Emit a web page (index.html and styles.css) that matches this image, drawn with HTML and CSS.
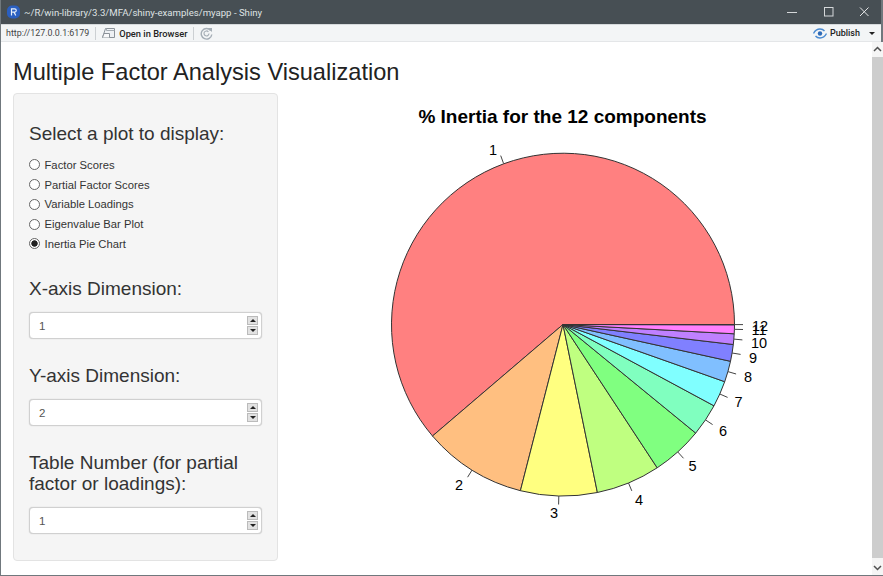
FILE: index.html
```html
<!DOCTYPE html>
<html lang="en">
<head>
    <meta charset="utf-8" />
    <title>~/R/win-library/3.3/MFA/shiny-examples/myapp - Shiny</title>
    <link rel="stylesheet" href="styles.css">
</head>
<body>
    <div class="window">
        <div class="titlebar">
            <svg class="r-logo" width="13" height="14" viewBox="0 0 13 14">
                <rect x="0" y="0.500" width="13" height="13" rx="5" fill="#2a5fc0" />
                <path d="M4.500 10.500V3.800H7.600a1.600 1.600 0 0 1 0 3.300H5.200M7 7.100L8.800 10.500" fill="none" stroke="#e8f0fb" stroke-width="1.200" />
            </svg>
            <span class="title-text">~/R/win-library/3.3/MFA/shiny-examples/myapp - Shiny</span>
            <div class="window-controls">
                <svg width="12" height="12" viewBox="0 0 12 12"><path d="M1 6.500H11" stroke="#d5d8da" stroke-width="1" /></svg>
                <svg width="12" height="12" viewBox="0 0 12 12"><rect x="1.500" y="1.500" width="8.500" height="8.500" fill="none" stroke="#d5d8da" stroke-width="1" /></svg>
                <svg width="12" height="12" viewBox="0 0 12 12"><path d="M1 1.500L9.500 10M9.500 1.500L1 10" stroke="#e4e6e7" stroke-width="1" /></svg>
            </div>
        </div>

        <div class="toolbar">
            <span class="url">http://127.0.0.1:6179</span>
            <span class="sep"></span>
            <svg class="open-icon" width="14" height="12" viewBox="0 0 14 12">
                <path d="M3.500 1.500H12.500V10.500H0.500Z" fill="#eef1f4" stroke="#8b9299" />
                <path d="M0.500 10.500L2 6.500H7.500V10.500" fill="#f8f9fa" stroke="#8b9299" />
                <path d="M4.500 1.500V3.500H12.500" fill="none" stroke="#a5acb3" />
            </svg>
            <span class="open-text">Open in Browser</span>
            <span class="sep"></span>
            <svg class="refresh-icon" width="13" height="13" viewBox="0 0 13 13">
                <path d="M10.700 3.500A5.300 5.300 0 1 0 11.800 7.500" fill="none" stroke="#a4adb5" stroke-width="1.400" />
                <path d="M9 6.500A2.500 2.500 0 1 1 8.400 4.800" fill="none" stroke="#a4adb5" stroke-width="1.100" />
                <path d="M7.500 1H12V5Z" fill="#a4adb5" />
            </svg>
            <div class="publish">
                <svg width="14" height="11" viewBox="0 0 14 11">
                    <circle cx="7" cy="5.500" r="2.200" fill="#2d6bb8" />
                    <path d="M0.500 5.500C2 2.500 4.500 1 7 1C9 1 10.500 1.800 11.500 3" fill="none" stroke="#4a8ad0" stroke-width="1.400" />
                    <path d="M13.500 5.500C12 8.500 9.500 10 7 10C5 10 3.500 9.200 2.500 8" fill="none" stroke="#4a8ad0" stroke-width="1.400" />
                </svg>
                <span>Publish</span>
                <span class="caret"></span>
            </div>
        </div>

        <div class="content">
            <div class="page">
                <h2 class="app-title">Multiple Factor Analysis Visualization</h2>
                <div class="row">
                    <div class="well">
                        <div class="field">
                            <label class="control-label">Select a plot to display:</label>
                            <div class="radios">
                                <label class="radio"><input type="radio" name="plot"><span>Factor Scores</span></label>
                                <label class="radio"><input type="radio" name="plot"><span>Partial Factor Scores</span></label>
                                <label class="radio"><input type="radio" name="plot"><span>Variable Loadings</span></label>
                                <label class="radio"><input type="radio" name="plot"><span>Eigenvalue Bar Plot</span></label>
                                <label class="radio"><input type="radio" name="plot" checked><span>Inertia Pie Chart</span></label>
                            </div>
                        </div>
                        <div class="field">
                            <label class="control-label">X-axis Dimension:</label>
                            <div class="number-input">
                                <span class="value">1</span>
                                <span class="spinner"><i class="up"></i><i class="down"></i></span>
                            </div>
                        </div>
                        <div class="field">
                            <label class="control-label">Y-axis Dimension:</label>
                            <div class="number-input">
                                <span class="value">2</span>
                                <span class="spinner"><i class="up"></i><i class="down"></i></span>
                            </div>
                        </div>
                        <div class="field">
                            <label class="control-label">Table Number (for partial factor or loadings):</label>
                            <div class="number-input">
                                <span class="value">1</span>
                                <span class="spinner"><i class="up"></i><i class="down"></i></span>
                            </div>
                        </div>
                    </div>

                    <svg class="plot" width="560" height="468" viewBox="300 93 560 468">
                        <text class="plot-title" x="562.500" y="123">% Inertia for the 12 components</text>
                        <g stroke="#333" stroke-width="1">
                            <path fill="#ff8080" d="M563 324.500L734.500 324.500A171.500 171.500 0 1 0 432.500 436Z" />
                            <path fill="#ffbf80" d="M563 324.500L432.500 436A171.500 171.500 0 0 0 520.400 490.700Z" />
                            <path fill="#ffff80" d="M563 324.500L520.400 490.700A171.500 171.500 0 0 0 597.400 492.500Z" />
                            <path fill="#bfff80" d="M563 324.500L597.400 492.500A171.500 171.500 0 0 0 657.200 467.800Z" />
                            <path fill="#80ff80" d="M563 324.500L657.200 467.800A171.500 171.500 0 0 0 695.700 433.100Z" />
                            <path fill="#80ffbf" d="M563 324.500L695.700 433.100A171.500 171.500 0 0 0 714 405.800Z" />
                            <path fill="#80ffff" d="M563 324.500L714 405.800A171.500 171.500 0 0 0 724.700 381.700Z" />
                            <path fill="#80bfff" d="M563 324.500L724.700 381.700A171.500 171.500 0 0 0 730.500 361.300Z" />
                            <path fill="#8080ff" d="M563 324.500L730.500 361.300A171.500 171.500 0 0 0 733.300 344.500Z" />
                            <path fill="#bf80ff" d="M563 324.500L733.300 344.500A171.500 171.500 0 0 0 734.200 333.800Z" />
                            <path fill="#ff80ff" d="M563 324.500L734.200 333.800A171.500 171.500 0 0 0 734.500 324.800Z" />
                            <path fill="#ff80bf" d="M563 324.500L734.500 324.800A171.500 171.500 0 0 0 734.500 324.500Z" />
                        </g>
                        <g stroke="#444" stroke-width="1">
                            <path d="M503.600 163.600L500.700 155.600" />
                            <path d="M472.100 470L467.600 477.200" />
                            <path d="M558.800 496L558.600 504.500" />
                            <path d="M628.500 483L631.800 490.900" />
                            <path d="M677.700 451.900L683.500 458.300" />
                            <path d="M705.500 419.900L712.600 424.600" />
                            <path d="M719.800 394L727.600 397.400" />
                            <path d="M727.900 371.600L736.100 374" />
                            <path d="M732.100 353L740.600 354.400" />
                            <path d="M733.900 339.100L742.400 339.900" />
                            <path d="M734.400 329.300L743 329.500" />
                            <path d="M734.500 324.600L743 324.600" />
                        </g>
                        <g class="pie-labels">
                            <text x="493" y="154.500">1</text>
                            <text x="459" y="490">2</text>
                            <text x="554" y="518">3</text>
                            <text x="639" y="505">4</text>
                            <text x="692.500" y="471">5</text>
                            <text x="723" y="435.500">6</text>
                            <text x="738.500" y="407">7</text>
                            <text x="748" y="382">8</text>
                            <text x="753" y="362.500">9</text>
                            <text x="759" y="347.500">10</text>
                            <text x="759" y="335">11</text>
                            <text x="760" y="330.500">12</text>
                        </g>
                    </svg>
                </div>
            </div>
            <div class="scrollbar">
                <svg width="9" height="6" viewBox="0 0 9 6"><path d="M1 5L4.500 1.500L8 5" fill="none" stroke="#505050" stroke-width="1.500" /></svg>
                <div class="scroll-thumb"></div>
                <svg width="9" height="6" viewBox="0 0 9 6"><path d="M1 1L4.500 4.500L8 1" fill="none" stroke="#505050" stroke-width="1.500" /></svg>
            </div>
        </div>
    </div>
</body>
</html>
```
FILE: styles.css
```css
html, body {
    margin: 0;
    padding: 0;
    height: 100%;
}

body {
    font-family: "Liberation Sans", Arial, sans-serif;
    color: #333;
    background-color: #fff;
    overflow: hidden;
}

.window {
    height: 576px;
    box-sizing: border-box;
    border-left: 1px solid #70787d;
    border-right: 2px solid #70787d;
    border-bottom: 1px solid #70787d;
    display: flex;
    flex-direction: column;
}

.titlebar {
    height: 24px;
    flex: none;
    background-color: #474f54;
    color: #dfe2e3;
    font-family: Roboto, sans-serif;
    font-size: 9.600px;
    display: flex;
    align-items: center;
    padding-left: 6px;
    box-sizing: border-box;
}

.r-logo {
    margin-right: 4px;
}

.window-controls {
    margin-left: auto;
    display: flex;
    gap: 24.500px;
    padding-right: 10px;
}

.toolbar {
    height: 18px;
    flex: none;
    box-sizing: border-box;
    background-color: #f3f5f6;
    border-top: 1px solid #d6dadc;
    border-bottom: 1px solid #e4e6e8;
    display: flex;
    align-items: center;
    font-family: Roboto, sans-serif;
    font-size: 9.500px;
    color: #333;
    padding-left: 5px;
}

.url {
    color: #444;
    font-size: 8.900px;
}

.sep {
    width: 1px;
    height: 13px;
    background-color: #ccd0d3;
    margin: 0 6px;
}

.open-icon {
    margin-right: 3px;
}

.open-text {
    color: #222;
    font-weight: 500;
    font-size: 9.300px;
}

.publish {
    margin-left: auto;
    padding-right: 6px;
    display: flex;
    align-items: center;
    gap: 3px;
    font-size: 9px;
    font-weight: 500;
    color: #222;
}

.caret {
    width: 0;
    height: 0;
    border-left: 3px solid transparent;
    border-right: 3px solid transparent;
    border-top: 3px solid #222;
    margin-left: 6px;
}

.content {
    flex: 1;
    display: flex;
    min-height: 0;
}

.page {
    flex: 1;
    padding: 0 12px;
}

.app-title {
    font-size: 23.600px;
    font-weight: 400;
    color: #222;
    margin: 17px 0 8px;
    line-height: 26px;
}

.row {
    display: flex;
}

.well {
    width: 265px;
    height: 468px;
    box-sizing: border-box;
    background-color: #f5f5f5;
    border: 1px solid #e3e3e3;
    border-radius: 4px;
    padding: 29px 15px 0;
    flex: none;
}

.field {
    margin-bottom: 26px;
}

.control-label {
    display: block;
    font-size: 19px;
    line-height: 21px;
    margin-bottom: 13px;
    color: #333;
}

.radios {
    font-size: 11.250px;
    margin: -2px 0;
}

.radio {
    display: flex;
    align-items: center;
    height: 19.750px;
    gap: 4.500px;
}

.radio input {
    appearance: none;
    width: 11px;
    height: 11px;
    margin: 0;
    border: 1px solid #666;
    border-radius: 50%;
    background-color: #fff;
    box-sizing: border-box;
}

.radio input:checked {
    background: radial-gradient(circle, #222 0, #222 2.800px, #fff 3.600px);
}

.number-input {
    height: 27px;
    box-sizing: border-box;
    background-color: #fff;
    border: 1px solid #d0d0d0;
    border-radius: 4px;
    box-shadow: 0 0 1px #bbb;
    display: flex;
    align-items: center;
    justify-content: space-between;
    padding: 0 3px 0 9px;
    font-size: 11.500px;
    color: #555;
}

.value {
    padding-top: 2px;
}

.spinner {
    width: 11px;
    height: 19px;
    display: flex;
    flex-direction: column;
    gap: 1px;
}

.spinner i {
    flex: 1;
    background-color: #e2e2e2;
    border: 1px solid #bbb;
    display: flex;
    align-items: center;
    justify-content: center;
}

.up::before {
    content: "";
    border-left: 3px solid transparent;
    border-right: 3px solid transparent;
    border-bottom: 3px solid #222;
}

.down::before {
    content: "";
    border-left: 3px solid transparent;
    border-right: 3px solid transparent;
    border-top: 3px solid #222;
}

.plot {
    margin-left: 22px;
    flex: none;
    display: block;
}

.plot-title {
    font-size: 19px;
    font-weight: 700;
    fill: #000;
    text-anchor: middle;
}

.pie-labels text {
    font-size: 14.500px;
    fill: #000;
    text-anchor: middle;
}

.scrollbar {
    width: 11px;
    flex: none;
    background-color: #f5f5f5;
    display: flex;
    flex-direction: column;
    align-items: center;
    padding: 4px 0;
    box-sizing: border-box;
}

.scroll-thumb {
    flex: 1;
    width: 100%;
    margin: 5px 0 7px;
    background-color: #cdcdcd;
}
```
